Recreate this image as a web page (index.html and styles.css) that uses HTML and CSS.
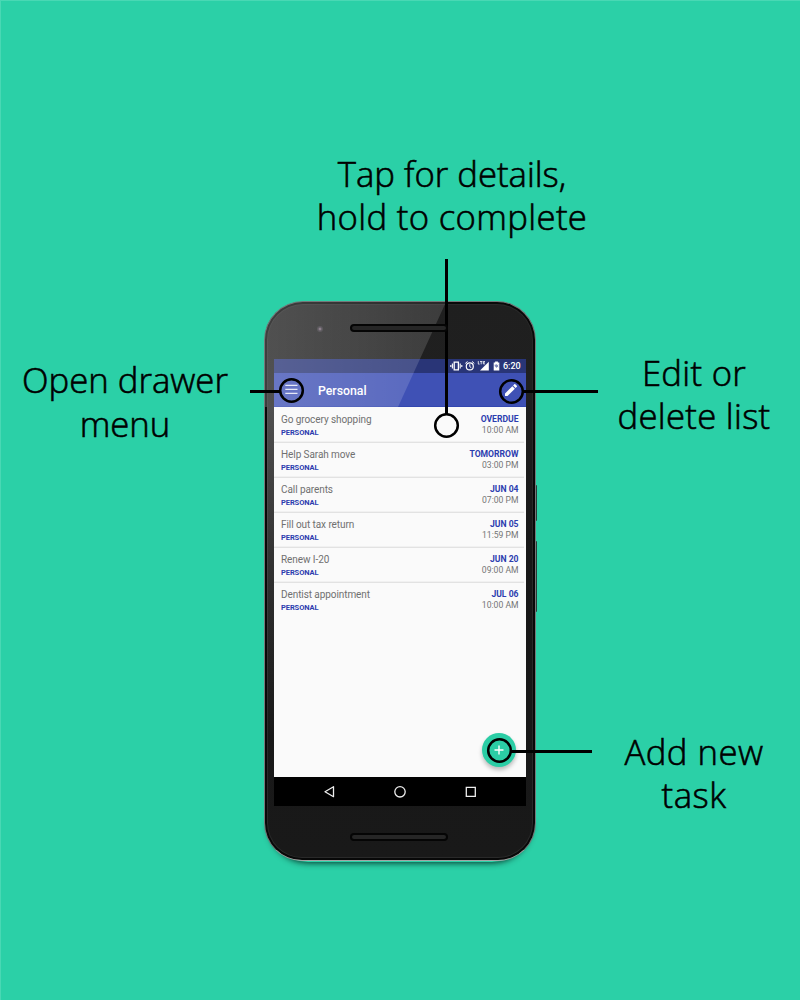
FILE: index.html
```html
<!DOCTYPE html>
<html lang="en">
<head>
<meta charset="utf-8">
<title>Task list guide</title>
<link rel="stylesheet" href="styles.css">
</head>
<body>
<main class="stage">
  <div class="phone">
    <i class="side-key power"></i><i class="side-key volume"></i>
    <div class="body">
      <div class="top-bezel"><i class="camera"></i><i class="speaker"></i></div>
      <div class="screen">
        <div class="status">
          <svg class="status-icons" width="52" height="14" viewBox="0 0 52 14" fill="none" stroke="#fff">
            <path d="M4.2 3.2h4.2v7.6H4.2z" stroke-width="1.3"/>
            <path d="M2.4 4.6v4.8M.8 6v2M10.2 4.6v4.8M11.8 6v2" stroke-width="1.1"/>
            <circle cx="19.8" cy="7.4" r="3.5" stroke-width="1.2"/>
            <path d="M19.8 5.2v2.5l1.5 1M15.3 4.4l2.2-1.9M24.3 4.4l-2.2-1.9" stroke-width="1"/>
            <path d="M38.8 2.7v8.8h-8.8z" fill="#fff" stroke="none"/>
            <path d="M28.3 2.1v3h1.3M30 2.5h2.4M31.2 2.5v2.8M35 2.5h-1.7v2.4H35M33.5 3.7h1.2" stroke-width=".8"/>
            <path d="M43.7 3.6h1.4v-1h2.8v1h1.4v7.9h-5.6z" fill="#fff" stroke="none"/>
            <path d="M45.2 5.6v1.6h1.2M46.4 5.3v3.4M48.1 5.7l-.8 1.3.8 1.2" stroke="#3c4a92" stroke-width=".7"/>
          </svg>
          <span class="clock">6:20</span>
        </div>
        <header class="appbar">
          <svg class="menu" width="13" height="11" viewBox="0 0 13 11" stroke="#e1e4f5" stroke-width="1.2"><path d="M.3 1.4h12.2M.3 5.3h12.2M.3 9.3h12.2"/></svg>
          <h1 class="title">Personal</h1>
          <svg class="pencil" width="12" height="12" viewBox="3 3 18 18" fill="#fff"><path d="M3 17.25V21h3.75L17.81 9.94l-3.75-3.75L3 17.25zM20.71 7.04a1 1 0 0 0 0-1.41l-2.34-2.34a1 1 0 0 0-1.41 0l-1.83 1.83 3.75 3.75 1.83-1.83z"/></svg>
        </header>
        <ul class="tasks">
          <li class="task"><div><p class="name">Go grocery shopping</p><p class="list">PERSONAL</p></div><div class="due"><p class="day">OVERDUE</p><p class="time">10:00 AM</p></div></li>
          <li class="task"><div><p class="name">Help Sarah move</p><p class="list">PERSONAL</p></div><div class="due"><p class="day">TOMORROW</p><p class="time">03:00 PM</p></div></li>
          <li class="task"><div><p class="name">Call parents</p><p class="list">PERSONAL</p></div><div class="due"><p class="day">JUN 04</p><p class="time">07:00 PM</p></div></li>
          <li class="task"><div><p class="name">Fill out tax return</p><p class="list">PERSONAL</p></div><div class="due"><p class="day">JUN 05</p><p class="time">11:59 PM</p></div></li>
          <li class="task"><div><p class="name">Renew I-20</p><p class="list">PERSONAL</p></div><div class="due"><p class="day">JUN 20</p><p class="time">09:00 AM</p></div></li>
          <li class="task"><div><p class="name">Dentist appointment</p><p class="list">PERSONAL</p></div><div class="due"><p class="day">JUL 06</p><p class="time">10:00 AM</p></div></li>
        </ul>
        <div class="fab"><svg width="12" height="12" viewBox="0 0 12 12" stroke="#fff" stroke-width="1.4"><path d="M1.5 6h9M6 1.5v9"/></svg></div>
        <nav class="navbar">
          <svg width="252" height="29" viewBox="0 0 252 29" fill="none" stroke="#eee" stroke-width="1.3">
            <path d="M51 14.7l8.5-5v10z" stroke-linejoin="round"/><circle cx="126" cy="14.8" r="5.2"/><path d="M192.3 10.3h9v9h-9z"/>
          </svg>
        </nav>
      </div>
      <div class="bottom-bezel"><i class="speaker"></i></div>
      <div class="gloss"></div>
      <div class="edge-sheen"></div>
    </div>
  </div>
  <svg class="callouts" width="800" height="1000" viewBox="0 0 800 1000" fill="none" stroke="#000" stroke-width="2.5">
    <circle cx="291.5" cy="390.5" r="11.3"/><circle cx="511.5" cy="391.5" r="11.3"/><circle cx="446.5" cy="425.5" r="11.3"/><circle cx="499.5" cy="750.5" r="11.3"/>
    <path d="M250 391.5h30M523 391.5h75M446.5 259v155M511 751.5h81" stroke-width="3"/>
  </svg>
  <p class="note tap"><span>Tap for details,</span><span class="wide">hold to complete</span></p>
  <p class="note drawer"><span>Open drawer</span><span>menu</span></p>
  <p class="note edit"><span>Edit or</span><span>delete list</span></p>
  <p class="note add"><span>Add new</span><span>task</span></p>
</main>
</body>
</html>
```
FILE: styles.css
```css
* { box-sizing: border-box; }
body, p, h1, ul { margin: 0; padding: 0; }
body { background: #2bd0a7; }
.stage {
  position: relative;
  width: 800px;
  height: 1000px;
  padding: 301px 0 0 264px;
  overflow: hidden;
  background: #2bd0a7;
  box-shadow: inset 1px 1px #49d8b4;
  font-family: Roboto, sans-serif;
}
.phone { position: relative; width: 272px; height: 560px; }
.phone::before {
  content: "";
  position: absolute;
  left: 4px; right: 4px; bottom: -1px;
  height: 40px;
  border-radius: 0 0 40px 40px;
  box-shadow: 0 1px 6px 0 rgba(0, 30, 24, .85);
}
.side-key { position: absolute; right: -1px; width: 3px; background: #283b38; border-radius: 1px; }
.power { top: 184px; height: 36px; }
.volume { top: 240px; height: 71px; }
.body {
  position: relative;
  display: flex;
  flex-direction: column;
  height: 560px;
  padding: 0 9px;
  overflow: hidden;
  border: 1px solid #74797a;
  border-bottom-color: #a5a5a5;
  border-radius: 39px 39px 38px 38px;
  background: linear-gradient(#1f1f1f, #202020 15%, #171717 45%, #191919);
  box-shadow: inset 0 0 0 2px #080808, inset 0 0 0 3px #292929;
}
.top-bezel { display: flex; height: 57px; flex: none; padding: 23px 0 0 42px; }
.camera { width: 6px; height: 6px; margin: 1px 0 0 1px; border-radius: 50%; background: radial-gradient(#81707f 10%, #3a353d 45%, #303030); }
.speaker { display: block; width: 98px; height: 8px; border: 2px solid #050505; border-radius: 4px; background: #262626; }
.top-bezel .speaker { position: relative; z-index: 2; margin: -1px 0 0 27px; }
.bottom-bezel { height: 53px; padding: 27px 0 0 76px; }
.screen { position: relative; display: flex; flex-direction: column; width: 252px; height: 447px; background: #fafafa; flex: none; }
.status { height: 14px; flex: none; display: flex; align-items: center; justify-content: flex-end; padding-right: 4px; gap: 1px; background: #293577; }
.clock { width: 19px; color: #fff; font-size: 9px; line-height: 14px; font-weight: 500; white-space: nowrap; }
.status-icons { flex: none; }
.appbar { height: 34px; flex: none; display: flex; align-items: center; padding: 0 9px 0 11px; background: #3f51b5; border-bottom: 1px solid #3347b0; }
.title { flex: 1; margin-left: 20px; padding-top: 2px; color: #fff; font-size: 12.3px; line-height: 32px; font-weight: 500; }
.tasks { height: 370px; flex: none; list-style: none; padding: 1px 2px 0 0; }
.task { display: flex; justify-content: space-between; height: 35px; padding: 5px 5.5px 0 7px; border-bottom: 1px solid #e2e2e2; box-shadow: inset 0 -1px #f1f1f1; }
.task:last-child { border: 0; box-shadow: none; }
.name { font-size: 10px; letter-spacing: -.08px; line-height: 14px; color: #707070; }
.list { font-size: 7.5px; letter-spacing: -.08px; line-height: 9px; font-weight: 700; color: #2c3daf; margin-top: 1px; }
.due { text-align: right; }
.day { font-size: 8.6px; line-height: 12px; font-weight: 700; color: #2c3daf; }
.time { font-size: 8.6px; line-height: 11px; color: #757575; }
.fab { position: absolute; left: 207.5px; top: 374px; width: 34px; height: 34px; display: grid; place-items: center; border-radius: 50%; background: #2bcda5; box-shadow: 0 3px 4px rgba(0, 0, 0, .25); }
.navbar { height: 29px; background: #000; }
.gloss {
  position: absolute;
  inset: 0 90px auto 0;
  height: 105px;
  background: linear-gradient(to right, rgba(255,255,255,.22), rgba(255,255,255,.13));
  clip-path: polygon(0 0, 181px 0, 133px 105px, 0 105px);
}
.edge-sheen { position: absolute; left: 2px; top: 105px; width: 7px; height: 330px; background: linear-gradient(rgba(255,255,255,.22), rgba(255,255,255,0)); }
.callouts { position: absolute; inset: 0; }
.note { position: absolute; font: 300 34.7px/43px "Open Sans", sans-serif; color: #000; text-align: center; white-space: nowrap; -webkit-text-stroke: .6px #000; }
.note span { display: block; }
.wide { letter-spacing: .35px; }
.tap { left: 302px; top: 152px; width: 300px; }
.drawer { left: 0; top: 358px; width: 250px; line-height: 44px; }
.edit { left: 594px; top: 351px; width: 200px; letter-spacing: .3px; }
.add { left: 594px; top: 730px; width: 200px; letter-spacing: .5px; }
```
